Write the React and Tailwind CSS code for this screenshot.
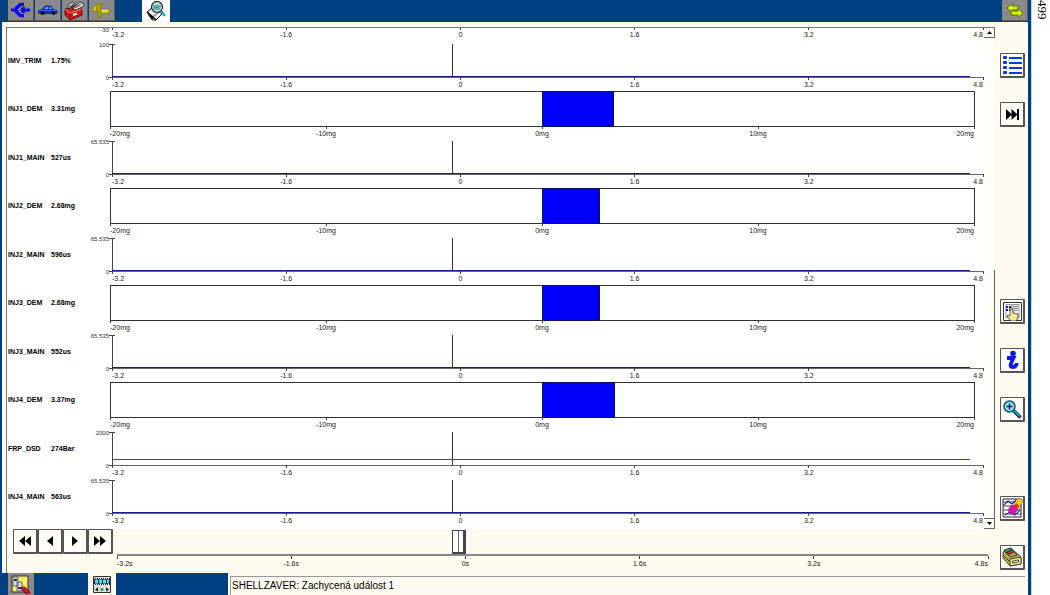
import React, { useState } from 'react';

const TIME_MIN = -3.2;
const TIME_MAX = 4.8;
const TIME_TICKS = [-3.2, -1.6, 0, 1.6, 3.2, 4.8];
const MASS_TICKS = [-20, -10, 0, 10, 20];

const CHANNELS = [
  { name: 'IMV_TRIM', value: '1.75%', type: 'line', max: '100', level: 0 },
  { name: 'INJ1_DEM', value: '3.31mg', type: 'bar', amount: 3.31 },
  { name: 'INJ1_MAIN', value: '527us', type: 'line', max: '65.535', level: 0 },
  { name: 'INJ2_DEM', value: '2.68mg', type: 'bar', amount: 2.68 },
  { name: 'INJ2_MAIN', value: '596us', type: 'line', max: '65.535', level: 0 },
  { name: 'INJ3_DEM', value: '2.68mg', type: 'bar', amount: 2.68 },
  { name: 'INJ3_MAIN', value: '552us', type: 'line', max: '65.535', level: 0 },
  { name: 'INJ4_DEM', value: '3.37mg', type: 'bar', amount: 3.37 },
  { name: 'FRP_DSD', value: '274Bar', type: 'line', max: '2000', level: 0.137 },
  { name: 'INJ4_MAIN', value: '563us', type: 'line', max: '65.535', level: 0 },
];

/* ---------- Icons ---------- */

const PlugIcon = () => (
  <svg width="20" height="16" viewBox="0 0 20 16" fill="none" stroke="#0a0af0">
    <path d="M0 8h6" strokeWidth="3" />
    <path d="M13 2.500H9.500L5.500 6v4l4 3.500H13" strokeWidth="3.500" />
    <path d="M14 5h-2.500L9.500 7v2l2 2H14z" fill="#0a0af0" stroke="none" />
    <path d="M12 8h7" strokeWidth="3" />
  </svg>
);

const CarIcon = () => (
  <svg width="20" height="10" viewBox="0 0 20 10">
    <path d="M0 5l4-1 3-3.500h6L15.500 4l3.500 1 1 3-2 1H2L0 8z" fill="#1030b0" />
    <path d="M6 4l2-2h2v2zM11 2h1.500L14 4h-3z" fill="#7298d8" />
    <path d="M1 5.500h17" stroke="#3468f0" />
    <circle cx="4.500" cy="8" r="2" fill="#111" />
    <circle cx="15.500" cy="8" r="2" fill="#111" />
  </svg>
);

const ToolboxIcon = () => (
  <svg width="22" height="19" viewBox="0 0 22 19">
    <path d="M1 8l12-4 5 4v6L6 19 1 14z" fill="#d81818" stroke="#400" strokeWidth=".8" />
    <path d="M1 8l5 4 12-4" fill="none" stroke="#ff8a80" />
    <path d="M6 12v7" stroke="#700" />
    <path d="M3 7l2-4 4-2 2 2-3 1-1 3zM8 8l8-7 3 1 1 3-8 4z" fill="#d8d8d8" stroke="#222" strokeWidth=".8" />
    <path d="M11 7l6-4M5 5l5 3" stroke="#333" />
    <path d="M9 13l4-1.500v2L9 15z" fill="#fff" />
  </svg>
);

const TapIcon = () => (
  <svg width="17" height="16" viewBox="0 0 17 16" stroke="#6b6400" strokeWidth=".6">
    <path d="M0 6l3-3 4-2v10L5 9H0z" fill="#d8cf00" />
    <path d="M5 1h3v14H5V9L3 7z" fill="#b0a800" />
    <path d="M8 7h8v4H8z" fill="#e8e020" />
  </svg>
);

const ScopeIcon = () => (
  <svg width="22" height="20" viewBox="0 0 22 20">
    <path d="M2 11l6-5 9 7-6 6H7z" fill="#eee" stroke="#111" />
    <path d="M2 11l6 5 3 3M4 14l4 4" fill="none" stroke="#111" strokeWidth="1.500" />
    <path d="M8 16l6-5" stroke="#555" />
    <path d="M16 10l4 5" stroke="#18a8c8" strokeWidth="2.500" />
    <circle cx="12" cy="6" r="5.500" fill="#a8dcd8" stroke="#222" strokeWidth="1.200" />
    <path d="M8 5h8M8 8h7" stroke="#26837f" />
    <path d="M9 6.500h5" stroke="#d05060" />
  </svg>
);

const SwapIcon = () => (
  <svg width="18" height="15" viewBox="0 0 18 15" fill="#d4f000" stroke="#4c5c00" strokeWidth=".8">
    <path d="M1 5l5-4.500V3h6v4H6v2.500z" />
    <path d="M17 10l-5 4.500V12H5V8h7V5.500z" />
  </svg>
);

const ListIcon = () => (
  <svg width="19" height="19" viewBox="0 0 19 19" fill="#0838e0">
    {[1, 6, 11, 16].map((y) => (
      <g key={y}>
        <rect x="0" y={y - 1} width="4" height="3" rx="1" />
        <rect x="6" y={y} width="13" height="2" />
      </g>
    ))}
  </svg>
);

const SkipIcon = () => (
  <svg width="13" height="11" viewBox="0 0 13 11" fill="#000">
    <path d="M0 0l6 5.500L0 11zM5.500 0l6 5.500-6 5.500z" />
    <path d="M11 0h2v11h-2z" />
  </svg>
);

const SelectIcon = () => (
  <svg width="19" height="19" viewBox="0 0 19 19">
    <path d="M.5.5h18v18H.5z" fill="#fff" stroke="#333" />
    <path d="M3 2.500h6v13H3zM10 2.500h6v13h-6z" fill="#fff" stroke="#777" strokeWidth=".8" />
    <path d="M3 5h6M3 8h6" stroke="#1010c8" strokeWidth="2" strokeDasharray="2 1" />
    <path d="M11 4.500h4M11 6.500h4M11 8.500h4" stroke="#555" strokeWidth=".8" />
    <path d="M7 6h2l1 5 5 1v4l-2 3H8l-4-5 1-1 2 1z" fill="#f4ec90" stroke="#333" strokeWidth=".8" />
  </svg>
);

const InfoIcon = () => (
  <svg width="14" height="20" viewBox="0 0 14 20">
    <circle cx="8" cy="3.500" r="2.800" fill="#0a18e8" />
    <path d="M2 8h6.500C6 13 4 17 7.500 17c2.500 0 4-1.500 4.500-4" fill="none" stroke="#0a18e8" strokeWidth="3.800" />
  </svg>
);

const MagnifierIcon = () => (
  <svg width="19" height="19" viewBox="0 0 19 19">
    <path d="M10.500 10.500l7 7" stroke="#111" strokeWidth="3.500" />
    <path d="M11 10.500l6 6" stroke="#1c9cd0" strokeWidth="2" />
    <circle cx="6.500" cy="6.500" r="5.500" fill="#88e4ec" stroke="#12565e" strokeWidth="1.500" />
    <path d="M3.500 6.500h6M6.500 3.500v6" stroke="#101860" strokeWidth="1.500" />
  </svg>
);

const EraseIcon = () => (
  <svg width="21" height="20" viewBox="0 0 21 20">
    <path d="M1 1h18v18H1z" fill="#fff" stroke="#222" />
    <path d="M1 4h18M1 8h18M1 12h18M1 16h18" stroke="#444" />
    <path d="M2 7l4-4 4 3 4-4M3 17l5-3 5 3 5-5" fill="none" stroke="#2020d0" strokeWidth="1.200" />
    <path d="M11 7l6-7 4 3-5 8z" fill="#f8d820" stroke="#a06000" strokeWidth=".6" />
    <path d="M7 11c1-3 3-4 5-3l3 3c0 3-3 5-5 5s-4-2-3-5z" fill="#e010b8" stroke="#600050" strokeWidth=".6" />
    <path d="M11 8l4-3 2 3-2 3z" fill="#e03020" />
  </svg>
);

const CardBoxIcon = () => (
  <svg width="20" height="20" viewBox="0 0 20 20" stroke="#222" strokeWidth=".8">
    <path d="M1 5l8-4 10 9v7L8 19 1 11z" fill="#b8b040" />
    <path d="M2 3l6-2 2 2-6 3z" fill="#20a080" />
    <path d="M4 6l6-3 2 2-6 3z" fill="#d02878" />
    <path d="M6 8l6-3 3 3-7 2z" fill="#b8b040" />
    <path d="M8 12l11-2v7L8 19z" fill="#ece88c" />
    <path d="M10.500 14l6-1v2l-6 1z" fill="#fff" />
    <path d="M1 8l7 7" fill="none" />
  </svg>
);

const ReportIcon = () => (
  <svg width="20" height="19" viewBox="0 0 20 19">
    <path d="M1 1h16v16H1z" fill="#f8f060" stroke="#333" />
    <path d="M2 2h5v9H2zM6 7h5v9H6z" fill="#ddd" stroke="#444" strokeWidth=".8" />
    <path d="M3 5h3M7 13h4" stroke="#1818a8" strokeWidth="2" />
    <path d="M12 13l6 6" stroke="#500" strokeWidth="4.500" />
    <path d="M11 12l7 6.500" stroke="#d81818" strokeWidth="3" />
  </svg>
);

const RecorderIcon = () => (
  <svg width="18" height="17" viewBox="0 0 18 17">
    <path d="M.5.5h17v16H.5z" fill="#ddd" stroke="#333" />
    <path d="M1 2h16v7H1z" fill="#102850" />
    <path d="M2 5.500h14" stroke="#50d8e8" strokeWidth="4" strokeDasharray="3 1" />
    <path d="M1 2.500h16M1 8.500h16" stroke="#fff" strokeDasharray="1 1" />
    <path d="M2 13.500l3-2v4zM16 13.500l-3-2v4z" fill="#111" />
    <circle cx="9" cy="13.500" r="1.500" fill="#10a830" />
  </svg>
);

const Arrows = ({ count = 1, back = false }) => (
  <svg width={count === 2 ? 12 : 6} height="10" viewBox={count === 2 ? '0 0 12 10' : '0 0 6 10'}>
    {count === 2 ? (
      <path d={back ? 'M6 0v10L0 5zM12 0v10L6 5z' : 'M0 0v10l6-5zM6 0v10l6-5z'} />
    ) : (
      <path d={back ? 'M6 0v10L0 5z' : 'M0 0v10l6-5z'} />
    )}
  </svg>
);

/* ---------- Buttons ---------- */

function TabButton({ label, children }) {
  return (
    <button aria-label={label} className="flex h-[21px] w-[26px] items-center justify-center border-r border-b border-[#5c5c5c] bg-[#8a8a8a]">
      {children}
    </button>
  );
}

function PushButton({ label, onClick, children }) {
  return (
    <button
      aria-label={label}
      onClick={onClick}
      className="flex size-[25px] items-center justify-center rounded-[1px] border border-r-2 border-b-2 border-[#555] bg-[#fffdf6]"
    >
      {children}
    </button>
  );
}

/* ---------- Charts ---------- */

function anchorFor(i, count) {
  if (i === 0) return 'start';
  return i === count - 1 ? 'end' : 'middle';
}

// Ticks hang down from y, with the label under each of them
function TickMarks({ ticks, y, unit = '' }) {
  return ticks.map((t, i) => {
    const x = `${(i / (ticks.length - 1)) * 100}%`;
    return (
      <g key={t}>
        <line x1={x} x2={x} y1={y} y2={y + 3} stroke="#444" shapeRendering="crispEdges" />
        <text x={x} y={y + 10} textAnchor={anchorFor(i, ticks.length)} fill="#222">
          {t}{unit}
        </text>
      </g>
    );
  });
}

function LineChart({ level, cursor }) {
  const traceY = Math.round(35 - level * 33);
  return (
    <svg className="mr-px ml-[2px] h-12 min-w-0 flex-1 overflow-visible text-[7px]">
      <path d="M-3 3.500h6M.5 3v36M-3 36.500h3" stroke="#444" fill="none" />
      <rect x="0" y="36" width="100%" height="1" fill="#666" />
      <rect x={`${cursor}%`} y="3" width="1" height="33" fill="#333" shapeRendering="crispEdges" />
      <rect x="0" y={traceY} width="98.5%" height="1" fill={level > 0 ? '#4038c8' : '#1c1c80'} />
      <TickMarks ticks={TIME_TICKS} y={36} />
    </svg>
  );
}

function BarChart({ amount }) {
  return (
    <svg className="mr-[10px] h-[49px] min-w-0 flex-1 overflow-visible text-[7px]">
      <g shapeRendering="crispEdges">
        <rect x="0" y="2.5" width="100%" height="35" fill="#fff" stroke="#333" />
        <rect x="50%" y="2.5" width={`${(amount / 40) * 100}%`} height="35" fill="#0000fa" stroke="#101060" />
      </g>
      <TickMarks ticks={MASS_TICKS} y={37} unit="mg" />
    </svg>
  );
}

function ChannelRow({ channel, cursor }) {
  return (
    <div className="flex">
      <div className="flex w-[76px] items-center pb-2 pl-px text-[7px] font-bold text-black">
        <span className="w-[43px]">{channel.name}</span>
        <span>{channel.value}</span>
      </div>
      <div className="flex w-[27px] flex-col items-end justify-between pr-px pb-[7px] text-[6px] leading-[8px] text-[#333]">
        {channel.type === 'line' && (
          <>
            <span>{channel.max}</span>
            <span>0</span>
          </>
        )}
      </div>
      {channel.type === 'line' ? (
        <LineChart level={channel.level} cursor={cursor} />
      ) : (
        <BarChart amount={channel.amount} />
      )}
    </div>
  );
}

function ScrollBar() {
  return (
    <div className="flex w-[11px] flex-col bg-[#fffdf8]">
      <button aria-label="Scroll up" className="flex h-[10px] items-center justify-center border-r border-b border-[#666]">
        <svg width="5" height="3" viewBox="0 0 5 3"><path d="M0 3h5L2.500 0z" /></svg>
      </button>
      <div className="mt-[232px] flex-1 border-r border-[#666]" />
      <button aria-label="Scroll down" className="flex h-[11px] items-center justify-center border-t border-r border-b border-[#666]">
        <svg width="5" height="3" viewBox="0 0 5 3"><path d="M0 0h5L2.500 3z" /></svg>
      </button>
    </div>
  );
}

export default function App() {
  const [time, setTime] = useState(-0.075);
  const cursor = ((time - TIME_MIN) / (TIME_MAX - TIME_MIN)) * 100;

  const move = (delta) => setTime((t) => Math.min(TIME_MAX, Math.max(TIME_MIN, t + delta)));

  return (
    <div className="flex min-h-screen bg-white font-['Liberation_Sans',Arial,sans-serif] text-black">
      <div className="flex min-w-0 flex-1 flex-col border-r-[3px] border-l-2 border-[#003f80] bg-[#fffbf0]">

        {/* Top tabs */}
        <header className="flex h-[22px] bg-[#003f80]">
          <nav className="flex flex-1 gap-px pl-[6px]">
            <TabButton label="Connection"><PlugIcon /></TabButton>
            <TabButton label="Vehicle"><CarIcon /></TabButton>
            <TabButton label="Toolbox"><ToolboxIcon /></TabButton>
            <TabButton label="Actuators"><TapIcon /></TabButton>
            <button aria-label="Datalogger" className="ml-[26px] flex w-7 items-center justify-center bg-white">
              <ScopeIcon />
            </button>
          </nav>
          <TabButton label="Communication"><SwapIcon /></TabButton>
        </header>

        <div className="flex flex-1">
          <main className="mt-[5px] ml-1 flex min-w-0 flex-1 flex-col">

            {/* Recorded channels */}
            <section className="flex border-t border-l border-[#777] bg-white">
              <div className="min-w-0 flex-1 pb-1">
                <div className="flex h-[13px] overflow-hidden">
                  <span className="w-[103px] pr-px text-right text-[6px] leading-[4px] text-[#333]">-30</span>
                  <svg className="mr-px ml-[2px] h-[13px] min-w-0 flex-1 overflow-visible text-[7px]">
                    <TickMarks ticks={TIME_TICKS} y={-1} />
                  </svg>
                </div>
                {CHANNELS.map((channel) => (
                  <ChannelRow key={channel.name} channel={channel} cursor={cursor} />
                ))}
              </div>
              <ScrollBar />
            </section>

            {/* Playback */}
            <section className="flex flex-1 border-l border-[#777]">
              <div className="flex items-start pl-[6px]">
                <PushButton label="Fast back" onClick={() => move(-0.8)}><Arrows count={2} back /></PushButton>
                <PushButton label="Back" onClick={() => move(-0.1)}><Arrows back /></PushButton>
                <PushButton label="Forward" onClick={() => move(0.1)}><Arrows /></PushButton>
                <PushButton label="Fast forward" onClick={() => move(0.8)}><Arrows count={2} /></PushButton>
              </div>
              <div className="mr-[7px] ml-1 flex min-w-0 flex-1 flex-col">
                <input
                  type="range"
                  aria-label="Time"
                  min={TIME_MIN}
                  max={TIME_MAX}
                  step="any"
                  value={time}
                  onChange={(e) => setTime(Number(e.target.value))}
                  className="m-0 block h-[27px] w-full appearance-none border-b-2 border-[#888] bg-transparent [&::-webkit-slider-thumb]:h-6 [&::-webkit-slider-thumb]:w-[14px] [&::-webkit-slider-thumb]:appearance-none [&::-webkit-slider-thumb]:border [&::-webkit-slider-thumb]:border-r-[3px] [&::-webkit-slider-thumb]:border-b-2 [&::-webkit-slider-thumb]:border-[#444] [&::-webkit-slider-thumb]:bg-[linear-gradient(90deg,#fff_5px,#666_5px,#666_6px,#fff_6px)]"
                />
                <svg className="h-3 w-full overflow-visible text-[7px]">
                  <TickMarks ticks={TIME_TICKS} y={0} unit="s" />
                </svg>
              </div>
            </section>
          </main>

          {/* Side commands */}
          <aside className="flex w-[33px] flex-col pt-[31px] pb-[3px] pl-[5px]">
            <div className="flex flex-col gap-6">
              <PushButton label="Channel list"><ListIcon /></PushButton>
              <PushButton label="Go to end"><SkipIcon /></PushButton>
            </div>
            <div className="mt-[172px] flex flex-col gap-6">
              <PushButton label="Select channels"><SelectIcon /></PushButton>
              <PushButton label="Information"><InfoIcon /></PushButton>
              <PushButton label="Zoom"><MagnifierIcon /></PushButton>
            </div>
            <div className="mt-auto flex flex-col gap-6">
              <PushButton label="Erase"><EraseIcon /></PushButton>
              <PushButton label="Archive"><CardBoxIcon /></PushButton>
            </div>
          </aside>
        </div>

        {/* Bottom bar */}
        <footer className="flex h-[22px]">
          <div className="flex w-[86px] bg-[#003f80] pl-[6px]">
            <button aria-label="Report" className="flex w-[26px] items-center justify-center bg-[#8a8a8a]">
              <ReportIcon />
            </button>
          </div>
          <button aria-label="Recorder" className="flex w-7 items-center justify-center">
            <RecorderIcon />
          </button>
          <div className="w-28 bg-[#003f80]" />
          <p className="mt-[3px] mr-[3px] ml-[2px] flex-1 border-t border-l border-[#999] pl-px text-[10px] leading-[18px]">
            SHELLZAVER: Zachycená událost 1
          </p>
        </footer>
      </div>

      <div className="w-[19px] border-l border-[#b8d8f0] pl-1">
        <span className="block font-['Liberation_Serif',serif] text-[13px] leading-[13px] [writing-mode:vertical-rl]">499</span>
      </div>
    </div>
  );
}
